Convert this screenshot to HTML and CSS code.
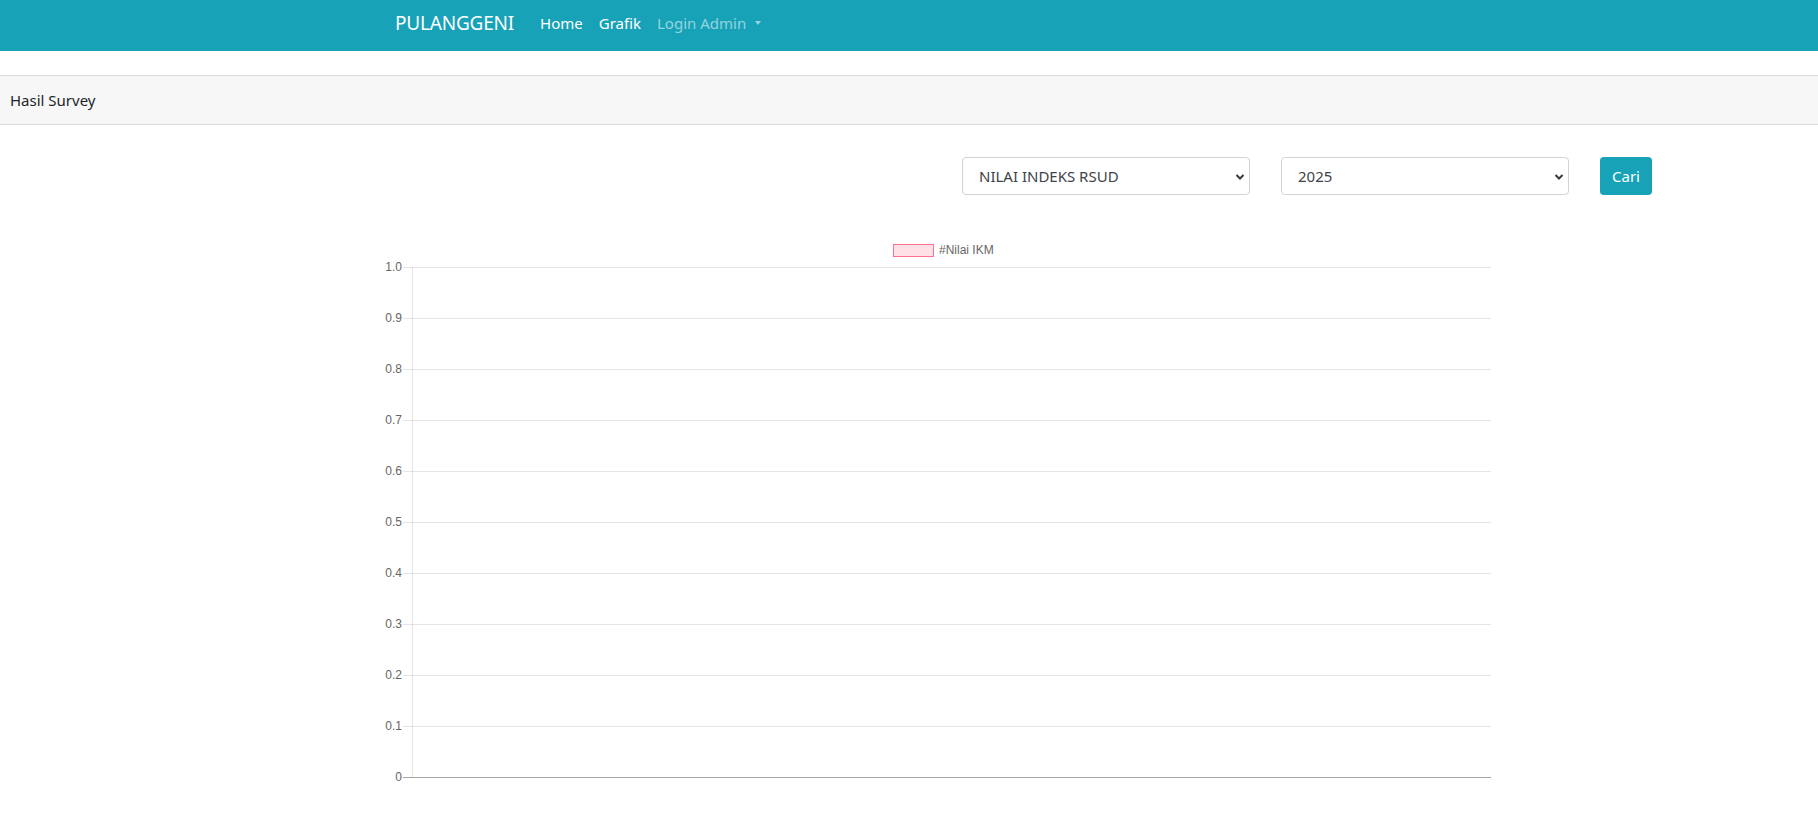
FILE: index.html
```html
<!DOCTYPE html>
<html lang="id">
<head>
<meta charset="utf-8">
<title>PULANGGENI - Hasil Survey</title>
<link rel="stylesheet" href="styles.css">
</head>
<body>
<nav class="navbar">
  <a class="brand" href="#">PULANGGENI</a>
  <ul class="nav">
    <li><a class="nav-link" href="#">Home</a></li>
    <li><a class="nav-link" href="#">Grafik</a></li>
    <li><a class="nav-link muted" href="#">Login Admin<span class="caret"></span></a></li>
  </ul>
</nav>

<section class="card">
  <div class="card-header">Hasil Survey</div>
  <div class="card-body">
    <form class="filter">
      <div class="select">
        <span class="select-text">NILAI INDEKS RSUD</span>
        <svg class="chev" width="10" height="8" viewBox="0 0 10 8"><path d="M1.5 2 L5 5.5 L8.5 2" fill="none" stroke="#343a40" stroke-width="2"/></svg>
      </div>
      <div class="select">
        <span class="select-text">2025</span>
        <svg class="chev" width="10" height="8" viewBox="0 0 10 8"><path d="M1.5 2 L5 5.5 L8.5 2" fill="none" stroke="#343a40" stroke-width="2"/></svg>
      </div>
      <button type="button" class="btn">Cari</button>
    </form>

    <div class="chart">
      <svg width="1140" height="570" viewBox="0 0 1140 570" font-family="'Liberation Sans', Arial, sans-serif" font-size="12" fill="#666">
        <!-- legend -->
        <rect x="533.5" y="14.5" width="40" height="12" fill="rgba(255,99,132,0.2)" stroke="rgba(255,99,132,0.9)" stroke-width="1"/>
        <text x="579" y="24">#Nilai IKM</text>
        <!-- horizontal grid -->
        <g stroke="rgba(0,0,0,0.1)" stroke-width="1">
          <line x1="43" y1="37.5" x2="1131" y2="37.5"/>
          <line x1="43" y1="88.5" x2="1131" y2="88.5"/>
          <line x1="43" y1="139.5" x2="1131" y2="139.5"/>
          <line x1="43" y1="190.5" x2="1131" y2="190.5"/>
          <line x1="43" y1="241.5" x2="1131" y2="241.5"/>
          <line x1="43" y1="292.5" x2="1131" y2="292.5"/>
          <line x1="43" y1="343.5" x2="1131" y2="343.5"/>
          <line x1="43" y1="394.5" x2="1131" y2="394.5"/>
          <line x1="43" y1="445.5" x2="1131" y2="445.5"/>
          <line x1="43" y1="496.5" x2="1131" y2="496.5"/>
          <line x1="52.5" y1="37" x2="52.5" y2="547"/>
        </g>
        <line x1="43" y1="547.5" x2="1131" y2="547.5" stroke="rgba(0,0,0,0.35)" stroke-width="1"/>
        <!-- y axis ticks -->
        <g text-anchor="end" dominant-baseline="middle">
          <text x="42" y="38">1.0</text>
          <text x="42" y="89">0.9</text>
          <text x="42" y="140">0.8</text>
          <text x="42" y="191">0.7</text>
          <text x="42" y="242">0.6</text>
          <text x="42" y="293">0.5</text>
          <text x="42" y="344">0.4</text>
          <text x="42" y="395">0.3</text>
          <text x="42" y="446">0.2</text>
          <text x="42" y="497">0.1</text>
          <text x="42" y="548">0</text>
        </g>
      </svg>
    </div>
  </div>
</section>
</body>
</html>
```

FILE: styles.css
```css
* { box-sizing: border-box; }

body {
  margin: 0;
  font-family: "Noto Sans", "Open Sans", sans-serif;
  color: #212529;
  background: #fff;
}

a { text-decoration: none; }

/* top bar */
.navbar {
  display: flex;
  align-items: center;
  height: 51px;
  padding: 0 0 5px 395px;
  background: #17a2b8;
}
.brand {
  color: #fff;
  font-size: 19px;
  margin-right: 18px;
  letter-spacing: -0.2px;
}
.nav {
  display: flex;
  list-style: none;
  margin: 0;
  padding: 0;
}
.nav-link {
  display: flex;
  align-items: center;
  padding: 0 8px;
  color: #fff;
  font-size: 15px;
}
.nav-link.muted { color: rgba(255, 255, 255, 0.55); }
.caret {
  display: inline-block;
  margin-left: 9px;
  border-top: 4px solid rgba(255, 255, 255, 0.55);
  border-left: 3.5px solid transparent;
  border-right: 3.5px solid transparent;
}

/* card */
.card {
  margin-top: 24px;
  border-top: 1px solid #dcdcdc;
}
.card-header {
  height: 49px;
  display: flex;
  align-items: center;
  padding: 0 10px;
  background: #f7f7f7;
  border-bottom: 1px solid #dcdcdc;
  font-size: 15px;
}

/* filter row */
.filter {
  display: flex;
  justify-content: flex-end;
  gap: 31px;
  margin: 32px 166px 0 0;
}
.select {
  position: relative;
  display: flex;
  align-items: center;
  width: 288px;
  height: 38px;
  padding: 0 16px 1px;
  border: 1px solid #ced4da;
  border-radius: 4px;
  background: #fff;
  font-size: 15px;
  color: #3d4349;
  white-space: nowrap;
}
.chev {
  position: absolute;
  right: 4px;
  top: 15px;
}
.btn {
  width: 52px;
  height: 38px;
  padding: 0 0 1px;
  border: 0;
  border-radius: 4px;
  background: #17a2b8;
  color: #fff;
  font-family: inherit;
  font-size: 15px;
}

/* chart */
.chart {
  margin: 35px 0 0 360px;
  height: 570px;
}
.chart svg { display: block; }
```
